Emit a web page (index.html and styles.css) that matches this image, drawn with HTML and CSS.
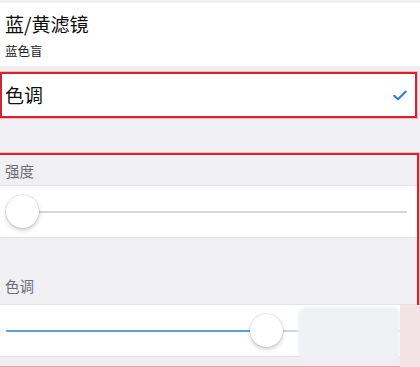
FILE: index.html
```html
<!DOCTYPE html>
<html lang="zh-CN">
<head>
<meta charset="utf-8">
<title>色调</title>
<link rel="stylesheet" href="styles.css">
</head>
<body>
<div class="screen">
  <div class="cell cell-tall">
    <div class="title">蓝/黄滤镜</div>
    <div class="sub">蓝色盲</div>
  </div>

  <div class="hl hl-one">
    <div class="cell cell-check">
      <span class="title">色调</span>
      <svg class="check" width="14" height="11" viewBox="0 0 14 11">
        <polyline points="1.2,5.8 5,9.3 12.8,1.5" fill="none" stroke="#2f7bd3" stroke-width="2" stroke-linecap="round" stroke-linejoin="round"/>
      </svg>
    </div>
  </div>

  <div class="hl hl-two">
    <div class="header">强度</div>
    <div class="cell slider-cell">
      <div class="slider" style="--v:0">
        <div class="fill"></div>
        <div class="knob"></div>
      </div>
    </div>
    <div class="header header-tall">色调</div>
    <div class="cell slider-cell">
      <div class="slider" style="--v:0.662">
        <div class="fill"></div>
        <div class="knob"></div>
      </div>
    </div>
    <div class="footer"></div>
  </div>

  <div class="veil"></div>
  <div class="veil-edge"></div>
</div>
</body>
</html>
```

FILE: styles.css
```css
html, body {
  margin: 0;
  padding: 0;
}
body {
  background: #efeff4;
  font-family: "Noto Sans CJK SC", "Noto Sans", sans-serif;
  color: #111;
}
.screen {
  position: relative;
  width: 420px;
  height: 367px;
  overflow: hidden;
  padding-top: 3px;
  box-sizing: border-box;
}
.cell {
  background: #fff;
}
.cell-tall {
  height: 63px;
  box-sizing: border-box;
  padding: 10px 0 0 5px;
}
.title {
  font-size: 19px;
  line-height: 22px;
  color: #0d0d0d;
}
.sub {
  font-size: 12.5px;
  line-height: 16px;
  margin-top: 8px;
  color: #222;
}
.hl {
  border: 2px solid #d3242f;
  box-shadow: 0 0 0 1px rgba(232, 120, 128, 0.45);
}
.hl-one {
  margin-top: 6px;
  width: 417px;
  box-sizing: border-box;
  height: 46px;
}
.cell-check {
  height: 42px;
  display: flex;
  align-items: center;
  justify-content: space-between;
  padding: 0 8px 0 3px;
}
.hl-two {
  margin-top: 35px;
  width: 419px;
  box-sizing: border-box;
  border-left: none;
  border-bottom-color: #eca3a9;
}
.header {
  height: 30px;
  display: flex;
  align-items: center;
  padding-left: 5px;
  font-size: 14.5px;
  color: #6d6d72;
}
.header-tall {
  height: 66px;
  align-items: flex-end;
  padding-bottom: 8px;
  box-sizing: border-box;
}
.slider-cell {
  height: 53px;
  box-sizing: border-box;
  border-top: 1px solid #e3e3e8;
  border-bottom: 1px solid #e3e3e8;
  display: flex;
  align-items: center;
}
.slider-cell + .footer {
  margin-top: 0;
}
.slider {
  position: relative;
  flex: 1;
  height: 33px;
  margin: 0 10px 0 6px;
}
.slider::before {
  content: "";
  position: absolute;
  left: 0;
  right: 0;
  top: 16px;
  height: 2px;
  background: #d6d6d9;
  border-radius: 1px;
}
.fill {
  position: absolute;
  left: 0;
  top: 16px;
  height: 2px;
  width: calc(var(--v) * (100% - 33px) + 16px);
  background: #5b9fdd;
  border-radius: 1px;
}
.knob {
  position: absolute;
  top: 0;
  left: calc(var(--v) * (100% - 33px));
  width: 33px;
  height: 33px;
  border-radius: 50%;
  background: #fff;
  box-shadow: 0 2px 4px rgba(0, 0, 0, 0.22), 0 0 0 0.5px rgba(0, 0, 0, 0.12);
}
.footer {
  height: 9px;
  background: #f2edf1;
}
.veil {
  position: absolute;
  left: 298px;
  top: 307px;
  width: 102px;
  height: 53px;
  border-radius: 8px;
  background: #eef2f4;
  filter: blur(1px);
}
.veil-edge {
  position: absolute;
  left: 400px;
  top: 305px;
  width: 20px;
  height: 62px;
  background: #f4e3e5;
}
```
